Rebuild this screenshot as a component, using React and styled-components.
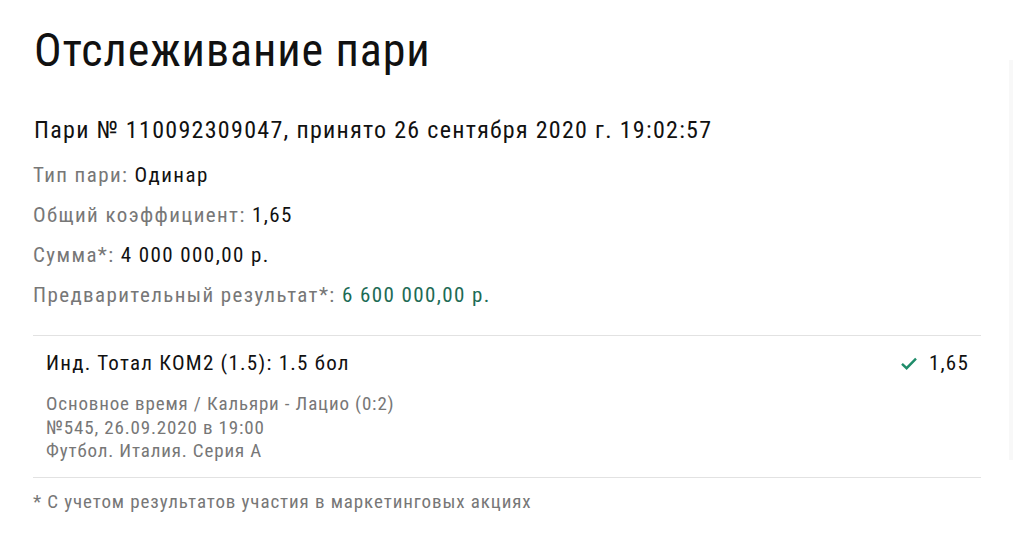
import React from 'react';
import styled, {createGlobalStyle} from 'styled-components';

const GlobalStyle = createGlobalStyle`
  body {
    margin: 0;
    background: #fff;
    font-family: "Roboto Condensed", Roboto, sans-serif;
  }
`

const Page = styled.div`
  display: flex;
  min-height: 535px;
`

const Content = styled.div`
  width: 948px;
  padding: 23px 0 0 33px;
`

const ScrollTrack = styled.div`
  margin: 60px 0 75px auto;
  width: 4px;
  background: #f8f8f8;
`

const Title = styled.h1`
  margin: 0 0 0 1px;
  font-size: 46px;
  font-weight: 400;
  line-height: 54px;
  letter-spacing: 0.9px;
  color: #111;
`

const BetHeader = styled.div`
  margin: 38px 0 10px 1px;
  font-size: 24px;
  line-height: 30px;
  letter-spacing: 1.3px;
  color: #111;
`

const InfoRow = styled.div`
  font-size: 21px;
  line-height: 40px;
  letter-spacing: 1.4px;
  color: #777;
`

const Value = styled.span`
  color: ${props => props.$green ? '#1d6b55' : '#111'};
`

const Divider = styled.div`
  height: 1px;
  margin-top: ${props => props.$gap || 0}px;
  background: #e2e2e2;
`

const Event = styled.div`
  display: flex;
  justify-content: space-between;
  padding: 12px 12px 14px 13px;
`

const EventBody = styled.div`
  display: flex;
  flex-direction: column;
`

const EventName = styled.div`
  font-size: 21px;
  line-height: 30px;
  letter-spacing: 1.25px;
  color: #111;
  margin-bottom: 14px;
`

const EventMeta = styled.div`
  font-size: 19px;
  line-height: 23.5px;
  letter-spacing: 0.85px;
  color: #777;
`

const Odds = styled.div`
  display: flex;
  align-items: center;
  gap: 12px;
  height: 30px;
  font-size: 21px;
  letter-spacing: 1.2px;
  color: #111;
`

const Note = styled.div`
  margin-top: 12px;
  font-size: 19px;
  line-height: 24px;
  letter-spacing: 0.9px;
  color: #777;
`

// green tick next to the won odds
const Check = () => (
    <svg width="16" height="13" viewBox="0 0 16 13">
        <path d="M1 6.8 L5.6 11.2 L15 1.6" fill="none" stroke="#1f8c6a" strokeWidth="2.4"/>
    </svg>
)

const info = [
    {label: 'Тип пари:', value: 'Одинар'},
    {label: 'Общий коэффициент:', value: '1,65'},
    {label: 'Сумма*:', value: '4 000 000,00 р.'},
    {label: 'Предварительный результат*:', value: '6 600 000,00 р.', green: true},
]

const App = () => {
    return (
        <Page>
            <GlobalStyle/>
            <Content>
                <Title>Отслеживание пари</Title>
                <BetHeader>Пари № 110092309047, принято 26 сентября 2020 г. 19:02:57</BetHeader>
                {info.map(row => (
                    <InfoRow key={row.label}>
                        {row.label} <Value $green={row.green}>{row.value}</Value>
                    </InfoRow>
                ))}
                <Divider $gap={20}/>
                <Event>
                    <EventBody>
                        <EventName>Инд. Тотал КОМ2 (1.5): 1.5 бол</EventName>
                        <EventMeta>Основное время / Кальяри - Лацио (0:2)</EventMeta>
                        <EventMeta>№545, 26.09.2020 в 19:00</EventMeta>
                        <EventMeta>Футбол. Италия. Серия А</EventMeta>
                    </EventBody>
                    <Odds><Check/>1,65</Odds>
                </Event>
                <Divider/>
                <Note>* С учетом результатов участия в маркетинговых акциях</Note>
            </Content>
            <ScrollTrack/>
        </Page>
    )
}

export default App;
